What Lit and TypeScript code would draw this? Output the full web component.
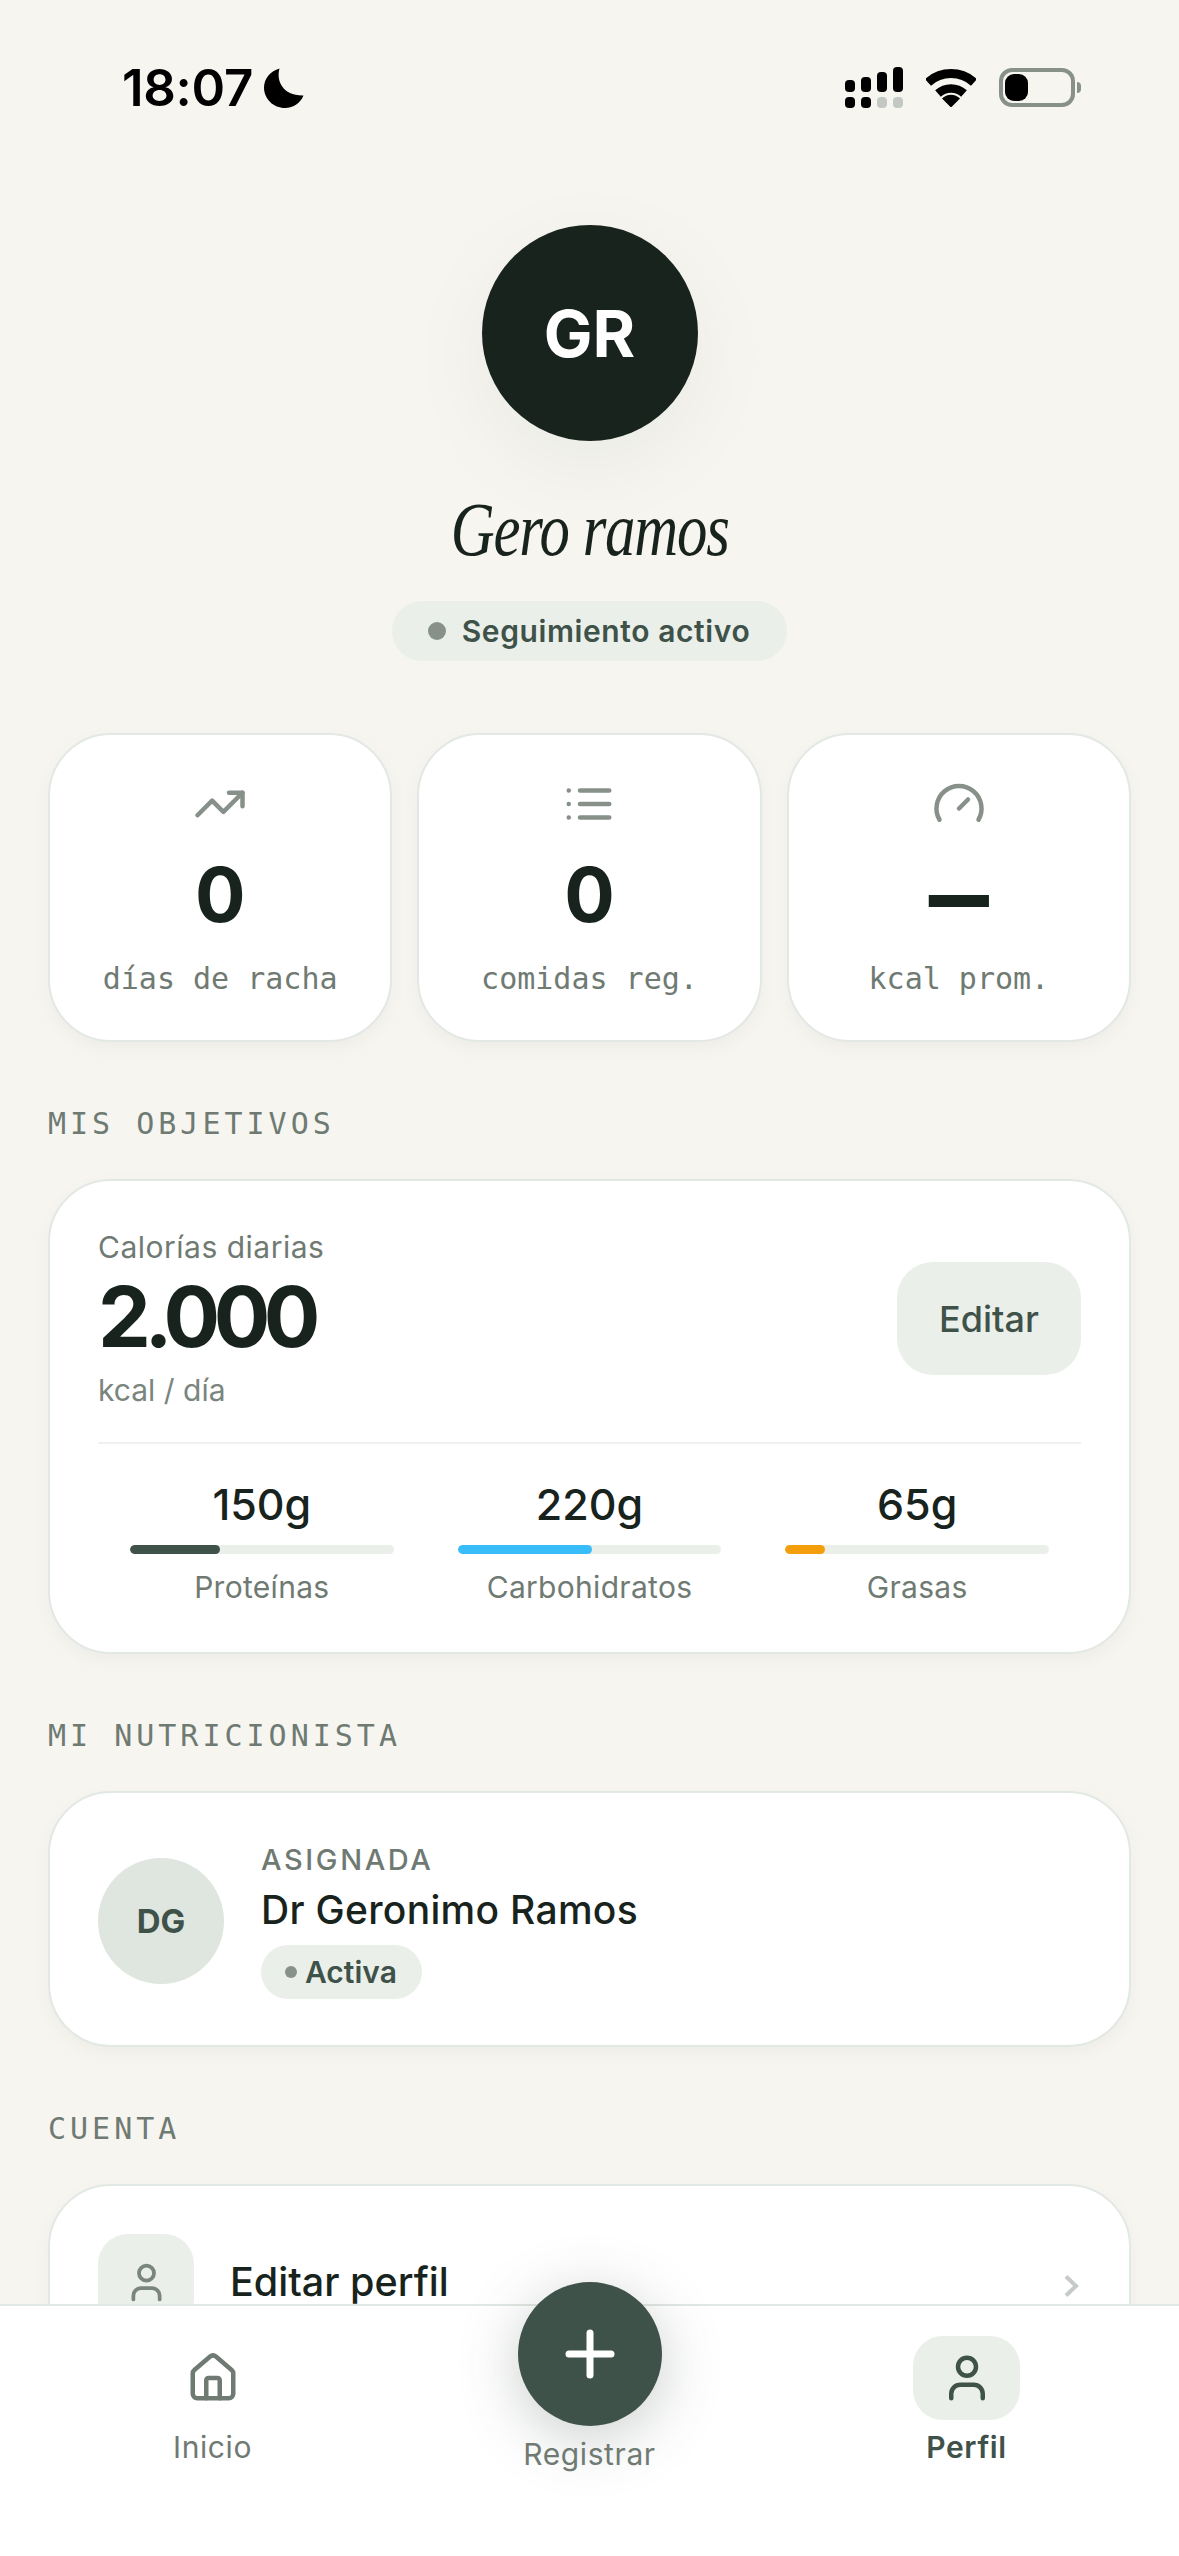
import { LitElement, html, css, svg } from 'lit';
import { customElement } from 'lit/decorators.js';

const icon = (body: unknown, cls = '') => html`
  <svg class="icon ${cls}" viewBox="0 0 24 24" fill="none" stroke="currentColor" stroke-linecap="round" stroke-linejoin="round">${body}</svg>
`;

const userPaths = svg`<path d="M19 21v-2a4 4 0 0 0-4-4H9a4 4 0 0 0-4 4v2"/><circle cx="12" cy="7" r="4"/>`;
const housePaths = svg`
  <path d="M15 21v-8a1 1 0 0 0-1-1h-4a1 1 0 0 0-1 1v8"/>
  <path d="M3 10a2 2 0 0 1 .709-1.528l7-5.999a2 2 0 0 1 2.582 0l7 5.999A2 2 0 0 1 21 10v9a2 2 0 0 1-2 2H5a2 2 0 0 1-2-2z"/>
`;

const stats = [
  {
    value: '0',
    label: 'días de racha',
    icon: svg`<polyline points="22 7 13.5 15.5 8.5 10.5 2 17"/><polyline points="16 7 22 7 22 13"/>`,
  },
  {
    value: '0',
    label: 'comidas reg.',
    icon: svg`<path d="M8 6h13M8 12h13M8 18h13M3 6h.01M3 12h.01M3 18h.01"/>`,
  },
  {
    value: '—',
    dash: true,
    label: 'kcal prom.',
    icon: svg`<path d="m12 14 4-4"/><path d="M3.34 19a10 10 0 1 1 17.32 0"/>`,
  },
];

const macros = [
  { value: '150g', label: 'Proteínas', pct: 34, color: '#3f5249' },
  { value: '220g', label: 'Carbohidratos', pct: 51, color: '#38bdf8' },
  { value: '65g', label: 'Grasas', pct: 15, color: '#f59e0b' },
];

@customElement('app-root')
export class AppRoot extends LitElement {
  static styles = css`
    :host {
      display: block;
      position: relative;
      height: 2556px;
      overflow: hidden;
      background: #f6f5f0;
      color: #18231d;
      font-family: Inter, 'Noto Sans', sans-serif;
    }

    .icon {
      display: block;
      flex: none;
    }

    /* status bar */
    .status {
      display: flex;
      align-items: center;
      height: 175px;
      padding: 0 98px 0 122px;
      box-sizing: border-box;
      color: #000;
    }

    .time {
      font-size: 51px;
      line-height: 51px;
      font-weight: 600;
      letter-spacing: -0.3px;
    }

    .moon {
      width: 40px;
      height: 40px;
      margin-left: 11px;
    }

    .status-right {
      display: flex;
      align-items: center;
      gap: 23px;
      margin-left: auto;
    }

    .signal {
      width: 58px;
      height: 41px;
    }

    .wifi {
      width: 50px;
      height: 38px;
    }

    .battery {
      display: flex;
      align-items: center;
      gap: 2px;
    }

    .battery-body {
      width: 76px;
      height: 39px;
      box-sizing: border-box;
      border: 4px solid #87918a;
      border-radius: 13px;
      padding: 2px;
    }

    .battery-fill {
      width: 23px;
      height: 100%;
      background: #000;
      border-radius: 9px;
    }

    .battery-nub {
      width: 4px;
      height: 11px;
      background: #87918a;
      border-radius: 0 4px 4px 0;
    }

    /* profile header */
    .profile {
      display: flex;
      flex-direction: column;
      align-items: center;
      padding-top: 50px;
    }

    .avatar {
      display: flex;
      align-items: center;
      justify-content: center;
      width: 216px;
      height: 216px;
      border-radius: 50%;
      background: #18231d;
      color: #fff;
      font-size: 65px;
      font-weight: 700;
      box-shadow: 0 24px 90px rgba(24, 35, 29, 0.05);
    }

    .name {
      margin-top: 48px;
      font-family: 'Liberation Serif', serif;
      font-style: italic;
      font-size: 76px;
      line-height: 80px;
      letter-spacing: -1.5px;
      transform: scaleX(0.8);
    }

    .badge {
      display: flex;
      align-items: center;
      gap: 16px;
      height: 60px;
      margin-top: 32px;
      padding: 0 37px 0 36px;
      border-radius: 30px;
      background: #ebefea;
      color: #3f5249;
      font-size: 30px;
      font-weight: 600;
      letter-spacing: 0.6px;
    }

    .dot {
      width: 18px;
      height: 18px;
      border-radius: 50%;
      background: #87918a;
    }

    /* cards */
    .content {
      padding: 72px 48px 0;
    }

    .card {
      background: #fff;
      border: 2px solid #e2e8e3;
      border-radius: 63px;
      box-shadow: 0 6px 18px rgba(24, 35, 29, 0.04);
    }

    .stats {
      display: grid;
      grid-template-columns: repeat(3, 1fr);
      gap: 25px;
    }

    .stat {
      display: flex;
      flex-direction: column;
      align-items: center;
      height: 309px;
      box-sizing: border-box;
      padding-top: 42px;
    }

    .stat-icon {
      width: 54px;
      height: 54px;
      stroke-width: 2;
      color: #87918a;
    }

    .stat-value {
      margin-top: 22px;
      font-size: 75px;
      line-height: 84px;
      font-weight: 700;
    }

    .stat-value.dash {
      font-family: 'DejaVu Sans Mono', monospace;
      font-size: 100px;
    }

    .stat-label {
      margin-top: 24px;
      font-family: 'DejaVu Sans Mono', 'Liberation Mono', monospace;
      font-size: 30px;
      line-height: 36px;
      color: #6f7a73;
    }

    .section-title {
      margin: 64px 0 37px;
      font-family: 'DejaVu Sans Mono', 'Liberation Mono', monospace;
      font-size: 30px;
      line-height: 36px;
      letter-spacing: 4px;
      color: #6f7a73;
    }

    /* goals */
    .goals {
      padding: 48px 48px 47px;
    }

    .goals-top {
      display: flex;
      align-items: center;
      justify-content: space-between;
    }

    .goals-label {
      font-size: 30px;
      line-height: 36px;
      letter-spacing: 0.5px;
      color: #6f7a73;
    }

    .goals-value {
      margin-top: 10px;
      font-size: 84px;
      line-height: 84px;
      font-weight: 700;
      letter-spacing: -6.5px;
    }

    .goals-unit {
      margin-top: 13px;
      font-size: 30px;
      line-height: 36px;
      color: #7a857e;
    }

    .edit {
      display: flex;
      align-items: center;
      justify-content: center;
      width: 184px;
      height: 113px;
      border-radius: 36px;
      background: #ebefea;
      color: #3f5249;
      font-size: 36px;
      font-weight: 500;
    }

    .goals-divider {
      height: 2px;
      margin-top: 34px;
      background: #eef1ee;
    }

    .macros {
      display: grid;
      grid-template-columns: repeat(3, 1fr);
      margin-top: 36px;
    }

    .macro {
      display: flex;
      flex-direction: column;
      align-items: center;
      padding: 0 32px;
    }

    .macro-value {
      font-size: 43px;
      line-height: 48px;
      font-weight: 500;
    }

    .macro-track {
      width: 100%;
      height: 9px;
      margin-top: 17px;
      border-radius: 5px;
      background: #ebefea;
      overflow: hidden;
    }

    .macro-fill {
      height: 100%;
      border-radius: 5px;
    }

    .macro-label {
      margin-top: 15px;
      font-size: 30px;
      line-height: 36px;
      letter-spacing: 0.3px;
      color: #6f7a73;
    }

    /* nutritionist */
    .nutri {
      display: flex;
      align-items: center;
      gap: 37px;
      padding: 50px 48px 46px;
    }

    .nutri-avatar {
      display: flex;
      align-items: center;
      justify-content: center;
      width: 126px;
      height: 126px;
      border-radius: 50%;
      background: #dfe5df;
      color: #3f5249;
      font-size: 33px;
      font-weight: 700;
    }

    .nutri-role {
      font-size: 29px;
      line-height: 34px;
      font-weight: 500;
      letter-spacing: 2.6px;
      color: #6f7a73;
    }

    .nutri-name {
      margin-top: 10px;
      font-size: 39px;
      line-height: 46px;
      font-weight: 500;
      letter-spacing: 0.3px;
    }

    .pill {
      display: inline-flex;
      align-items: center;
      gap: 8px;
      height: 54px;
      margin-top: 12px;
      padding: 0 25px 0 24px;
      border-radius: 27px;
      background: #ebefea;
      color: #3f5249;
      font-size: 30px;
      font-weight: 600;
    }

    .pill-dot {
      width: 12px;
      height: 12px;
      border-radius: 50%;
      background: #87918a;
    }

    /* account */
    .account {
      padding: 48px 50px 120px 48px;
    }

    .account-row {
      display: flex;
      align-items: center;
      gap: 36px;
    }

    .account-icon {
      display: flex;
      align-items: center;
      justify-content: center;
      width: 96px;
      height: 96px;
      border-radius: 30px;
      background: #ebefea;
      color: #7a857e;
    }

    .account-icon .icon {
      width: 45px;
      height: 45px;
      stroke-width: 2;
    }

    .account-text {
      flex: 1;
      font-size: 39.5px;
      line-height: 46px;
      font-weight: 500;
    }

    .chevron {
      width: 15px;
      height: 22px;
      margin-top: 8px;
    }

    /* bottom navigation */
    .nav {
      position: absolute;
      left: 0;
      right: 0;
      bottom: 0;
      height: 252px;
      box-sizing: border-box;
      display: grid;
      grid-template-columns: repeat(3, 1fr);
      padding: 0 24px;
      background: #fff;
      border-top: 2px solid #e2e8e3;
    }

    .nav-item {
      display: flex;
      flex-direction: column;
      align-items: center;
      padding-top: 30px;
      font-size: 30px;
      line-height: 36px;
      letter-spacing: 0.6px;
      color: #6f7a73;
    }

    .nav-item.active {
      color: #3f5249;
      font-weight: 600;
    }

    .nav-icon {
      display: flex;
      align-items: center;
      justify-content: center;
      width: 107px;
      height: 84px;
      margin-bottom: 9px;
      border-radius: 30px;
    }

    .nav-item.active .nav-icon {
      background: #ebefea;
    }

    .nav-icon .icon {
      width: 54px;
      height: 54px;
      stroke-width: 2;
    }

    .nav-add {
      padding-top: 0;
    }

    .fab {
      display: flex;
      align-items: center;
      justify-content: center;
      width: 144px;
      height: 144px;
      margin: -24px 0 10px;
      border-radius: 50%;
      background: #3f5249;
      box-shadow: 0 12px 60px rgba(63, 82, 73, 0.28);
    }

    .fab svg {
      width: 50px;
      height: 50px;
    }
  `;

  render() {
    return html`
      <div class="status">
        <span class="time">18:07</span>
        <svg class="moon" viewBox="0 0 40 40"><path fill="#000" d="M15.5 0.5C12 13 19 28 39.500 27.500C36.500 35 29.500 40 21 40C9.500 40 0 31 0 19.500C0 10.500 6.500 3 15.500 0.500Z"/></svg>
        <div class="status-right">
          <svg class="signal" viewBox="0 0 58 41">
            <rect x="0" y="13" width="10" height="12" rx="4"/>
            <rect x="16" y="10" width="10" height="15" rx="4"/>
            <rect x="32" y="5" width="10" height="20" rx="4"/>
            <rect x="48" y="0" width="10" height="25" rx="4"/>
            <rect x="0" y="30" width="10" height="11" rx="4"/>
            <rect x="16" y="30" width="10" height="11" rx="4"/>
            <rect x="32" y="30" width="10" height="11" rx="4" fill="#c3c8c4"/>
            <rect x="48" y="30" width="10" height="11" rx="4" fill="#c3c8c4"/>
          </svg>
          <svg class="wifi" viewBox="0 0 50 38" fill="none" stroke="#000">
            <path stroke-width="9" d="M2 13.400A34.500 34.500 0 0 1 48 13.400"/>
            <path stroke-width="8.500" d="M12 24.500A19.500 19.500 0 0 1 38 24.500"/>
            <path fill="#000" stroke="none" d="M25 38.500L16 29.500A12.500 12.500 0 0 1 34 29.500Z"/>
          </svg>
          <div class="battery">
            <div class="battery-body"><div class="battery-fill"></div></div>
            <div class="battery-nub"></div>
          </div>
        </div>
      </div>

      <div class="profile">
        <div class="avatar">GR</div>
        <div class="name">Gero ramos</div>
        <div class="badge"><span class="dot"></span>Seguimiento activo</div>
      </div>

      <div class="content">
        <div class="stats">
          ${stats.map(
            (s) => html`
              <div class="card stat">
                ${icon(s.icon, 'stat-icon')}
                <div class="stat-value ${s.dash ? 'dash' : ''}">${s.value}</div>
                <div class="stat-label">${s.label}</div>
              </div>
            `,
          )}
        </div>

        <div class="section-title">MIS OBJETIVOS</div>
        <div class="card goals">
          <div class="goals-top">
            <div>
              <div class="goals-label">Calorías diarias</div>
              <div class="goals-value">2.000</div>
              <div class="goals-unit">kcal / día</div>
            </div>
            <div class="edit">Editar</div>
          </div>
          <div class="goals-divider"></div>
          <div class="macros">
            ${macros.map(
              (m) => html`
                <div class="macro">
                  <div class="macro-value">${m.value}</div>
                  <div class="macro-track">
                    <div class="macro-fill" style="width:${m.pct}%;background:${m.color}"></div>
                  </div>
                  <div class="macro-label">${m.label}</div>
                </div>
              `,
            )}
          </div>
        </div>

        <div class="section-title">MI NUTRICIONISTA</div>
        <div class="card nutri">
          <div class="nutri-avatar">DG</div>
          <div>
            <div class="nutri-role">ASIGNADA</div>
            <div class="nutri-name">Dr Geronimo Ramos</div>
            <div class="pill"><span class="pill-dot"></span>Activa</div>
          </div>
        </div>

        <div class="section-title">CUENTA</div>
        <div class="card account">
          <div class="account-row">
            <div class="account-icon">${icon(userPaths)}</div>
            <div class="account-text">Editar perfil</div>
            <svg class="chevron" viewBox="0 0 15 22" fill="none" stroke="#c6cbc7" stroke-width="4">
              <polyline points="2,1.500 12,11 2,20.500"/>
            </svg>
          </div>
        </div>
      </div>

      <div class="nav">
        <div class="nav-item">
          <div class="nav-icon">${icon(housePaths)}</div>
          Inicio
        </div>
        <div class="nav-item nav-add">
          <div class="fab">
            <svg viewBox="0 0 50 50" fill="none" stroke="#fff" stroke-width="7" stroke-linecap="round">
              <path d="M25 4v42M4 25h42"/>
            </svg>
          </div>
          Registrar
        </div>
        <div class="nav-item active">
          <div class="nav-icon">${icon(userPaths)}</div>
          Perfil
        </div>
      </div>
    `;
  }
}
